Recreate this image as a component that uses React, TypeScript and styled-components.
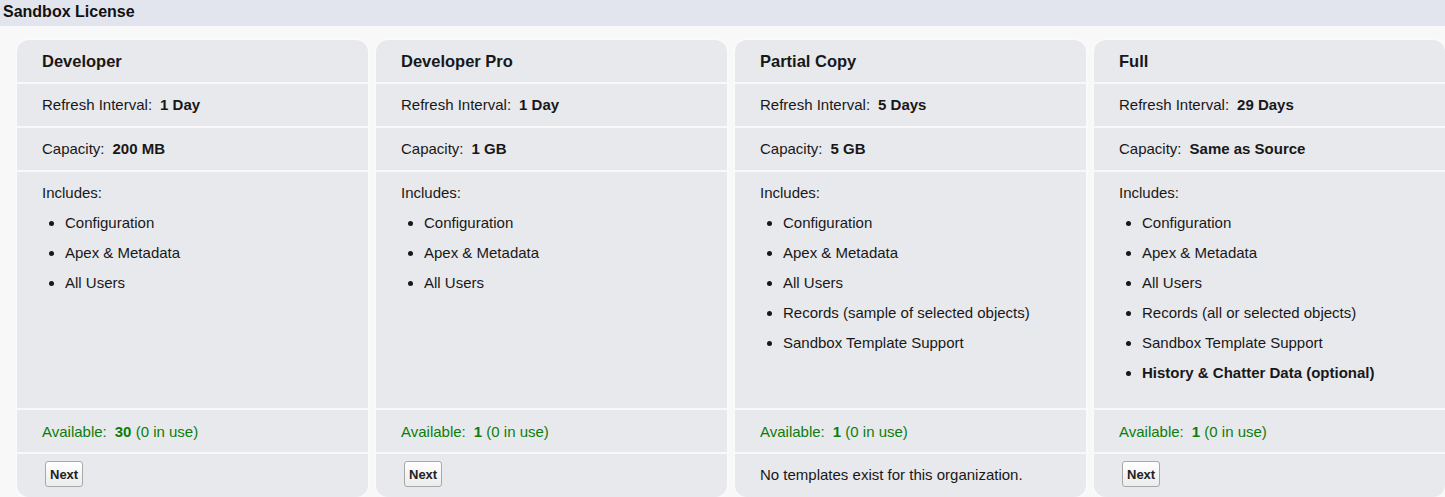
import React from "react";
import styled, { createGlobalStyle } from "styled-components";

const Global = createGlobalStyle`
  html, body { margin: 0; padding: 0; background: #f8f8f8; }
  body { font-family: "Liberation Sans", Arial, sans-serif; color: #181818; }
`;

const Page = styled.div`
  width: 1445px;
  height: 497px;
  overflow: hidden;
  background: #f8f8f8;
`;

const TitleBar = styled.div`
  height: 26px;
  box-sizing: border-box;
  background: #e2e5ee;
  padding: 3px 0 0 3px;
  font-size: 16px;
  font-weight: bold;
  line-height: 18px;
  color: #111;
`;

const Cards = styled.div`
  display: grid;
  grid-template-columns: repeat(4, 351px);
  column-gap: 8px;
  padding: 14px 0 0 17px;
`;

const Card = styled.div`
  background: #e8e9ed;
  border-radius: 12px;
  height: 457px;
  display: flex;
  flex-direction: column;
  overflow: hidden;
  box-shadow: 0 0 4px rgba(255, 255, 255, 0.9);
`;

const Row = styled.div<{ $h?: number; $pt?: number }>`
  height: ${(p) => p.$h ?? 44}px;
  box-sizing: border-box;
  padding: ${(p) => p.$pt ?? 12}px 0 0 25px;
  font-size: 15px;
  line-height: 18px;
  border-bottom: 2px solid #f8f8f8;
  flex-shrink: 0;
  &:last-child { border-bottom: none; flex: 1; }
`;

const Heading = styled(Row)`
  font-size: 16.5px;
  font-weight: bold;
`;

const Value = styled.b`
  margin-left: 8px;
`;

const Available = styled(Row)`
  color: #0c7d0c;
`;

const List = styled.ul`
  margin: 12px 0 0 0;
  padding: 0 0 0 23px;
  list-style: disc;
`;

const Item = styled.li<{ $bold?: boolean }>`
  line-height: 18px;
  margin-bottom: 12px;
  font-weight: ${(p) => (p.$bold ? "bold" : "normal")};
`;

const ActionRow = styled(Row)`
  padding-left: 28px;
`;

const NextButton = styled.button`
  font-family: "Liberation Sans", Arial, sans-serif;
  font-size: 13px;
  font-weight: bold;
  color: #222;
  height: 26px;
  padding: 0 4px;
  border: 1px solid #a8a8a8;
  border-radius: 3px;
  background: linear-gradient(#ffffff, #ececec);
  cursor: pointer;
`;

type Lic = {
  name: string;
  refresh: string;
  capacity: string;
  includes: { t: string; b?: boolean }[];
  available: string;
  hasTemplates: boolean;
};

const base = [{ t: "Configuration" }, { t: "Apex & Metadata" }, { t: "All Users" }];

const data: Lic[] = [
  { name: "Developer", refresh: "1 Day", capacity: "200 MB", includes: base, available: "30", hasTemplates: true },
  { name: "Developer Pro", refresh: "1 Day", capacity: "1 GB", includes: base, available: "1", hasTemplates: true },
  {
    name: "Partial Copy",
    refresh: "5 Days",
    capacity: "5 GB",
    includes: [...base, { t: "Records (sample of selected objects)" }, { t: "Sandbox Template Support" }],
    available: "1",
    hasTemplates: false,
  },
  {
    name: "Full",
    refresh: "29 Days",
    capacity: "Same as Source",
    includes: [
      ...base,
      { t: "Records (all or selected objects)" },
      { t: "Sandbox Template Support" },
      { t: "History & Chatter Data (optional)", b: true },
    ],
    available: "1",
    hasTemplates: true,
  },
];

export default function App() {
  return (
    <Page>
      <Global />
      <TitleBar>Sandbox License</TitleBar>
      <Cards>
        {data.map((d) => (
          <Card key={d.name}>
            <Heading>{d.name}</Heading>
            <Row>
              Refresh Interval:<Value>{d.refresh}</Value>
            </Row>
            <Row>
              Capacity:<Value>{d.capacity}</Value>
            </Row>
            <Row $h={238}>
              Includes:
              <List>
                {d.includes.map((i) => (
                  <Item key={i.t} $bold={i.b}>
                    {i.t}
                  </Item>
                ))}
              </List>
            </Row>
            <Available $pt={13}>
              Available:<Value>{d.available}</Value> (0 in use)
            </Available>
            {d.hasTemplates ? (
              <ActionRow $pt={7}>
                <NextButton>Next</NextButton>
              </ActionRow>
            ) : (
              <Row>No templates exist for this organization.</Row>
            )}
          </Card>
        ))}
      </Cards>
    </Page>
  );
}
